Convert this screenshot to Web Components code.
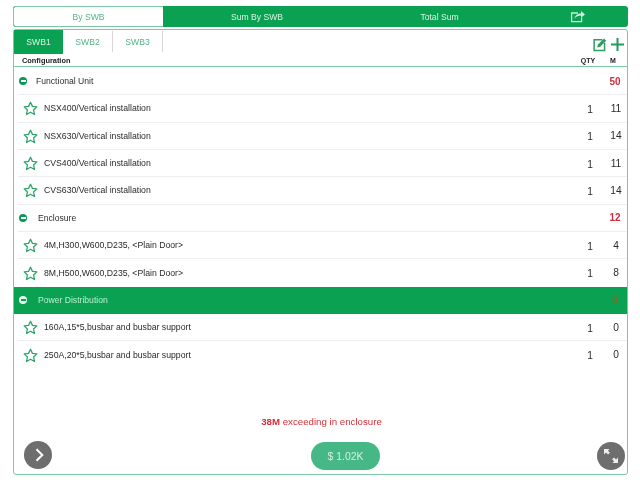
<!DOCTYPE html>
<html>
<head>
<meta charset="utf-8">
<title>SWB configuration</title>
<style>
  html, body { margin: 0; height: 100%; background: #fff; }
  body {
    font-family: "Liberation Sans", Arial, sans-serif;
    color: #333;
  }
</style>
</head>
<body>
<swb-app>
  <seg-bar></seg-bar>
  <swb-panel>
    <swb-tabs></swb-tabs>
    <group-row label="Functional Unit" total="50"></group-row>
    <item-row label="NSX400/Vertical installation" qty="1" m="11"></item-row>
    <item-row label="NSX630/Vertical installation" qty="1" m="14"></item-row>
    <item-row label="CVS400/Vertical installation" qty="1" m="11"></item-row>
    <item-row label="CVS630/Vertical installation" qty="1" m="14"></item-row>
    <group-row label="Enclosure" total="12" indent></group-row>
    <item-row label="4M,H300,W600,D235, <Plain Door>" qty="1" m="4"></item-row>
    <item-row label="8M,H500,W600,D235, <Plain Door>" qty="1" m="8" last></item-row>
    <group-row label="Power Distribution" total="0" indent selected></group-row>
    <item-row label="160A,15*5,busbar and busbar support" qty="1" m="0"></item-row>
    <item-row label="250A,20*5,busbar and busbar support" qty="1" m="0" last></item-row>
    <swb-footer slot="footer"></swb-footer>
  </swb-panel>
</swb-app>

<script>
class SwbApp extends HTMLElement {
  constructor() {
    super();
    this.attachShadow({ mode: 'open' }).innerHTML = `
      <style>
        :host {
          display: flex;
          flex-direction: column;
          gap: 2px;
          box-sizing: border-box;
          width: 640px;
          height: 480px;
          padding: 6px 12px 5px 13px;
          will-change: transform;
        }
      </style>
      <slot></slot>
    `;
  }
}

class SegBar extends HTMLElement {
  constructor() {
    super();
    this.attachShadow({ mode: 'open' }).innerHTML = `
      <style>
        :host {
          display: flex;
          flex: none;
          height: 21px;
          background: #0aa252;
          border-radius: 3px;
          font-size: 8.6px;
          color: #d8f3e4;
          overflow: hidden;
        }
        div {
          display: flex;
          align-items: center;
          justify-content: center;
          width: 150px;
          flex: none;
        }
        .on {
          box-sizing: border-box;
          background: #fff;
          color: #4fb683;
          border: 1px solid #7cc8a3;
          border-right: 0;
          border-radius: 3px 0 0 3px;
        }
        .share { flex: 1; }
        svg { display: block; }
      </style>
      <div class="on">By SWB</div>
      <div style="width:188px">Sum By SWB</div>
      <div style="width:177px">Total Sum</div>
      <div class="share">
        <svg width="16" height="13" viewBox="0 0 16 13" fill="none" stroke="#cdeedb" stroke-width="1.3">
          <path d="M8 3H1.6v8.6h10V7.5"/>
          <path d="M4.6 8.4c.5-3.4 3.2-5 6.4-5V1l4 3.4-4 3.4V5.6C8.6 5.6 6.2 6.4 4.6 8.4z" fill="#cdeedb" stroke="none"/>
        </svg>
      </div>
    `;
  }
}

class SwbPanel extends HTMLElement {
  constructor() {
    super();
    this.attachShadow({ mode: 'open' }).innerHTML = `
      <style>
        :host {
          display: flex;
          flex-direction: column;
          flex: 1;
          min-height: 0;
          box-sizing: border-box;
          border: 1px solid #7cc8a3;
          border-radius: 3px;
          background: #fff;
        }
        .foot { flex: 1; display: flex; flex-direction: column; justify-content: flex-end; }
      </style>
      <slot></slot>
      <div class="foot"><slot name="footer"></slot></div>
    `;
  }
}

class SwbTabs extends HTMLElement {
  constructor() {
    super();
    this.attachShadow({ mode: 'open' }).innerHTML = `
      <style>
        :host { display: block; flex: none; height: 36px; margin-bottom: 1px; border-bottom: 1px solid #7cc8a3; }
        .tabs { display: flex; height: 24px; font-size: 8.6px; color: #4fb683; }
        .tab {
          display: flex;
          align-items: center;
          justify-content: center;
          box-sizing: border-box;
          width: 50px;
          border-right: 1px solid #d6d6d6;
          margin: 1px 0 2px;
        }
        .tab.on { width: 49px; margin: 0; background: #0aa252; color: #d8f3e4; border: 0; }
        .tools { margin-left: auto; display: flex; align-items: center; gap: 3px; padding: 4px 2px 0 0; }
        svg { display: block; }
        .head {
          display: flex;
          align-items: center;
          height: 12px;
          font-size: 7.4px;
          font-weight: 700;
          color: #222;
        }
        .head .name { flex: 1; padding-left: 8px; }
        .head .qty { width: 22px; text-align: center; font-size: 7px; }
        .head .m { width: 28px; text-align: center; font-size: 7px; }
      </style>
      <div class="tabs">
        <div class="tab on">SWB1</div>
        <div class="tab">SWB2</div>
        <div class="tab">SWB3</div>
        <div class="tools">
          <svg width="14" height="15" viewBox="0 0 15 15">
            <path d="M10 2.4H1.2v11.4h11.2V6" fill="none" stroke="#2f9d62" stroke-width="1.6"/>
            <path d="M4.4 10.8l.9-3.2 6.5-6.5 2.4 2.4-6.5 6.5z" fill="#2f9d62"/>
          </svg>
          <svg width="15" height="15" viewBox="0 0 15 15">
            <path d="M7.5 1v13M1 7.5h13" stroke="#1f9c5a" stroke-width="2" fill="none"/>
          </svg>
        </div>
      </div>
      <div class="head">
        <span class="name">Configuration</span>
        <span class="qty">QTY</span>
        <span class="m">M</span>
      </div>
    `;
  }
}

class GroupRow extends HTMLElement {
  static template = document.createElement('template');
  constructor() {
    super();
    const root = this.attachShadow({ mode: 'open' });
    root.appendChild(GroupRow.template.content.cloneNode(true));
    root.querySelector('.name').textContent = this.getAttribute('label');
    root.querySelector('.total').textContent = this.getAttribute('total');
  }
}
GroupRow.template.innerHTML = `
  <style>
    :host {
      display: flex;
      align-items: center;
      flex: none;
      box-sizing: border-box;
      height: 27.33px;
      margin-left: 4px;
      padding-left: 1px;
      border-bottom: 1px solid #eee;
      font-size: 8.6px;
      color: #2e2e2e;
    }
    :host([selected]) {
      margin-left: 0;
      padding-left: 5px;
      background: #0aa252;
      color: #b5f0cf;
      border-bottom: 0;
    }
    .dot {
      position: relative;
      width: 8px;
      height: 8px;
      border-radius: 50%;
      background: #0d9a55;
      flex: none;
    }
    .dot::after {
      content: "";
      position: absolute;
      left: 1.5px;
      right: 1.5px;
      top: 3.2px;
      height: 1.6px;
      background: #fff;
    }
    :host([selected]) .dot { background: #e6f7ee; }
    :host([selected]) .dot::after { background: #0aa252; }
    .name { margin-left: 9px; flex: 1; }
    :host([indent]) .name { margin-left: 11px; }
    .total { width: 20px; text-align: center; margin-right: 2px; font-weight: 700; color: #cf2f3c; font-size: 10px; }
    :host([selected]) .total { color: #7f6b2c; }
  </style>
  <span class="dot"></span>
  <span class="name"></span>
  <span class="total"></span>
`;

class ItemRow extends HTMLElement {
  static template = document.createElement('template');
  constructor() {
    super();
    const root = this.attachShadow({ mode: 'open' });
    root.appendChild(ItemRow.template.content.cloneNode(true));
    root.querySelector('.name').textContent = this.getAttribute('label');
    root.querySelector('.qty').textContent = this.getAttribute('qty');
    root.querySelector('.m').textContent = this.getAttribute('m');
  }
}
ItemRow.template.innerHTML = `
  <style>
    :host {
      display: flex;
      align-items: center;
      flex: none;
      box-sizing: border-box;
      height: 27.33px;
      margin-left: 4px;
      padding-left: 4.5px;
      border-bottom: 1px solid #eee;
      font-size: 8.7px;
      color: #2a2a2a;
    }
    :host([last]) { border-bottom: 0; }
    svg { display: block; flex: none; margin-top: 1px; }
    .name { margin-left: 6.5px; flex: 1; }
    .qty { width: 30px; text-align: center; font-size: 10.2px; margin-top: 2px; }
    .m { width: 22px; text-align: center; font-size: 10.2px; }
  </style>
  <svg width="15" height="15" viewBox="0 0 14 14">
    <path d="M7 1.2l1.8 3.8 4.1.5-3 2.9.8 4.2L7 10.5l-3.7 2.1.8-4.2-3-2.9 4.1-.5z" fill="none" stroke="#2aa56a" stroke-width="1.2" stroke-linejoin="round"/>
  </svg>
  <span class="name"></span>
  <span class="qty"></span>
  <span class="m"></span>
`;

class SwbFooter extends HTMLElement {
  constructor() {
    super();
    this.attachShadow({ mode: 'open' }).innerHTML = `
      <style>
        :host { display: block; padding: 0 2px 4px 10px; }
        .warn {
          text-align: center;
          font-size: 9.7px;
          color: #d3303c;
          margin-bottom: 15px;
          padding-right: 6px;
        }
        .warn b { font-weight: 700; }
        .row { display: flex; align-items: center; }
        .round {
          display: flex;
          align-items: center;
          justify-content: center;
          width: 28px;
          height: 28px;
          border-radius: 50%;
          background: #6e6e6e;
        }
        .round.start { align-self: flex-start; margin-top: -1px; }
        .round.start svg { margin-left: 3px; }
        .round.end { margin-left: auto; }
        .price {
          display: flex;
          align-items: center;
          justify-content: center;
          width: 69px;
          height: 28px;
          border-radius: 14px;
          background: #45b886;
          color: #d2f0e2;
          font-size: 10.4px;
          margin-left: 259px;
        }
        svg { display: block; }
      </style>
      <div class="warn"><b>38M</b> exceeding in enclosure</div>
      <div class="row">
        <div class="round start">
          <svg width="9" height="14" viewBox="0 0 9 14" fill="none" stroke="#fff" stroke-width="2">
            <path d="M1.5 1.2L7.3 7 1.5 12.8"/>
          </svg>
        </div>
        <div class="price">$ 1.02K</div>
        <div class="round end">
          <svg width="16" height="16" viewBox="0 0 16 16" fill="#eee">
            <path d="M1 1h5.6L4.9 2.7l2 2-1.9 1.9-2-2L1 6.6z"/>
            <path d="M15 15H9.4l1.7-1.7-2-2 1.9-1.9 2 2L15 9.4z"/>
          </svg>
        </div>
      </div>
    `;
  }
}

customElements.define('swb-app', SwbApp);
customElements.define('seg-bar', SegBar);
customElements.define('swb-panel', SwbPanel);
customElements.define('swb-tabs', SwbTabs);
customElements.define('group-row', GroupRow);
customElements.define('item-row', ItemRow);
customElements.define('swb-footer', SwbFooter);
</script>
</body>
</html>
